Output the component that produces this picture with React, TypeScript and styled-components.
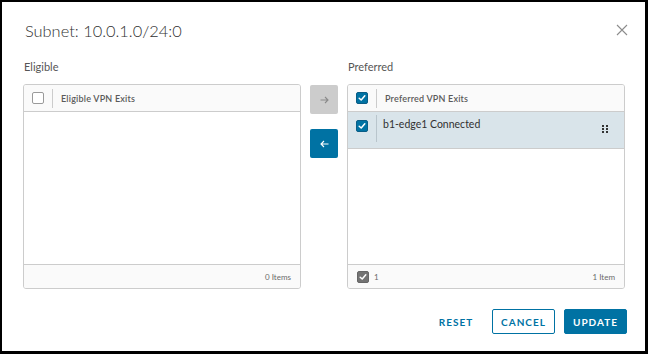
import styled, { createGlobalStyle } from "styled-components";

const GlobalStyle = createGlobalStyle`
  html, body {
    margin: 0;
    padding: 0;
    background: #000;
  }
  body {
    font-family: Lato, "Open Sans", "Liberation Sans", sans-serif;
    color: #565656;
  }
`;

type BoxKind = "empty" | "checked" | "muted";

const CheckIcon = () => (
  <svg width="8" height="8" viewBox="0 0 8 8">
    <path d="M1.2 4.2 L3.2 6 L6.8 1.8" fill="none" stroke="#fff" strokeWidth="1.5" strokeLinecap="round" strokeLinejoin="round" />
  </svg>
);

const Checkbox = ({ kind }: { kind: BoxKind }) => (
  <Box $kind={kind}>{kind !== "empty" && <CheckIcon />}</Box>
);

const ArrowIcon = ({ dir, color }: { dir: "left" | "right"; color: string }) => (
  <svg width="9" height="8" viewBox="0 0 9 8" style={{ transform: dir === "left" ? "scaleX(-1)" : undefined }}>
    <path d="M0.5 4 H8 M5 1 L8 4 L5 7" fill="none" stroke={color} strokeWidth="1.1" />
  </svg>
);

const Grip = () => (
  <svg width="6" height="8" viewBox="0 0 6 8">
    {[0, 3, 6].map((y) =>
      [0, 4].map((x) => <rect key={`${x}-${y}`} x={x} y={y} width="2" height="2" fill="#333" />)
    )}
  </svg>
);

export default function App() {
  return (
    <>
      <GlobalStyle />
      <Dialog>
        <Header>
          <Title>Subnet: 10.0.1.0/24:0</Title>
          <Close aria-label="close">
            <svg width="12" height="12" viewBox="0 0 12 12">
              <path d="M1 1 L11 11 M11 1 L1 11" stroke="#8c8c8c" strokeWidth="1.1" />
            </svg>
          </Close>
        </Header>

        <Columns>
          <Label>Eligible</Label>
          <span />
          <Label>Preferred</Label>

          <Panel>
            <PanelHead>
              <Checkbox kind="empty" />
              <Divider />
              <HeadText>Eligible VPN Exits</HeadText>
            </PanelHead>
            <PanelBody />
            <PanelFoot>
              <Spacer />
              <FootText>0 Items</FootText>
            </PanelFoot>
          </Panel>

          <Moves>
            <MoveButton $active={false}>
              <ArrowIcon dir="right" color="#8a8a8a" />
            </MoveButton>
            <MoveButton $active>
              <ArrowIcon dir="left" color="#fff" />
            </MoveButton>
          </Moves>

          <Panel>
            <PanelHead>
              <Checkbox kind="checked" />
              <Divider />
              <HeadText>Preferred VPN Exits</HeadText>
            </PanelHead>
            <PanelBody>
              <Row>
                <RowCheck>
                  <Checkbox kind="checked" />
                </RowCheck>
                <RowDivider />
                <RowText>b1-edge1 Connected</RowText>
                <GripWrap>
                  <Grip />
                </GripWrap>
              </Row>
            </PanelBody>
            <PanelFoot>
              <Checkbox kind="muted" />
              <FootText>1</FootText>
              <Spacer />
              <FootText>1 Item</FootText>
            </PanelFoot>
          </Panel>
        </Columns>

        <Actions>
          <Button $variant="flat">Reset</Button>
          <Button $variant="outline">Cancel</Button>
          <Button $variant="solid">Update</Button>
        </Actions>
      </Dialog>
    </>
  );
}

const Dialog = styled.div`
  margin: 2px 0 0 2px;
  width: 643px;
  height: 349px;
  box-sizing: border-box;
  background: #fff;
  padding: 0 20px 0 21px;
  display: flex;
  flex-direction: column;
`;

const Header = styled.div`
  height: 56px;
  display: flex;
  align-items: center;
  justify-content: space-between;
  padding-left: 2px;
`;

const Title = styled.h2`
  margin: 0;
  font-size: 16.4px;
  font-weight: 300;
  color: #313131;
`;

const Close = styled.div`
  display: flex;
  margin-right: -3px;
`;

const Columns = styled.div`
  display: grid;
  grid-template-columns: 278px 28px 278px;
  grid-template-rows: 18px 205px;
  column-gap: 9px;
  row-gap: 8px;
`;

const Label = styled.div`
  font-size: 11px;
  line-height: 18px;
  padding-left: 1px;
  color: #565656;
`;

const Panel = styled.div`
  border: 1px solid #ccc;
  border-radius: 3px;
  display: flex;
  flex-direction: column;
  overflow: hidden;
`;

const PanelHead = styled.div`
  height: 26px;
  border-bottom: 1px solid #ccc;
  background: #fafafa;
  display: flex;
  align-items: center;
  padding-left: 8px;
`;

const Divider = styled.div`
  width: 1px;
  height: 19px;
  background: #ccc;
  margin: 0 8px;
`;

const HeadText = styled.span`
  font-size: 9px;
  font-weight: 600;
  letter-spacing: 0.2px;
  color: #5a5a5a;
`;

const PanelBody = styled.div`
  flex: 1;
`;

const Row = styled.div`
  height: 36px;
  background: #d9e4ea;
  border-bottom: 1px solid #ccc;
  display: flex;
  align-items: flex-start;
`;

const RowCheck = styled.div`
  padding: 8px 8px 0 8px;
  display: flex;
`;

const RowDivider = styled.div`
  width: 1px;
  height: 27px;
  margin-top: 3px;
  background: #b9c5cc;
`;

const RowText = styled.span`
  font-size: 10.5px;
  color: #313131;
  margin: 6px 0 0 6px;
`;

const GripWrap = styled.div`
  margin: 13px 16px 0 auto;
  display: flex;
`;

const PanelFoot = styled.div`
  height: 23px;
  border-top: 1px solid #ccc;
  background: #fafafa;
  display: flex;
  align-items: center;
  gap: 5px;
  padding: 0 9px;
`;

const Spacer = styled.div`
  flex: 1;
`;

const FootText = styled.span`
  font-size: 8px;
  color: #6a6a6a;
`;

const Box = styled.div<{ $kind: BoxKind }>`
  width: 12px;
  height: 12px;
  box-sizing: border-box;
  border-radius: 2px;
  display: flex;
  align-items: center;
  justify-content: center;
  border: 1px solid ${(p) => (p.$kind === "empty" ? "#9a9a9a" : p.$kind === "checked" ? "#0a5d86" : "#666")};
  background: ${(p) => (p.$kind === "empty" ? "#fff" : p.$kind === "checked" ? "#0072a3" : "#737373")};
`;

const Moves = styled.div`
  display: flex;
  flex-direction: column;
  gap: 15px;
  padding-top: 1px;
`;

const MoveButton = styled.div<{ $active: boolean }>`
  height: 29px;
  border-radius: 2px;
  display: flex;
  align-items: center;
  justify-content: center;
  background: ${(p) => (p.$active ? "#0072a3" : "#cccccc")};
`;

const Actions = styled.div`
  display: flex;
  justify-content: flex-end;
  gap: 9px;
  margin: 20px -2px 0 0;
`;

const Button = styled.button<{ $variant: "flat" | "outline" | "solid" }>`
  height: 25px;
  width: ${(p) => (p.$variant === "flat" ? "54px" : "63px")};
  padding: 0;
  border-radius: 2px;
  font-family: Lato, "Open Sans", sans-serif;
  font-size: 10px;
  font-weight: 700;
  letter-spacing: 1px;
  text-transform: uppercase;
  border: 1px solid ${(p) => (p.$variant === "flat" ? "transparent" : "#0072a3")};
  background: ${(p) => (p.$variant === "solid" ? "#0072a3" : "#fff")};
  color: ${(p) => (p.$variant === "solid" ? "#fff" : "#0072a3")};
`;
